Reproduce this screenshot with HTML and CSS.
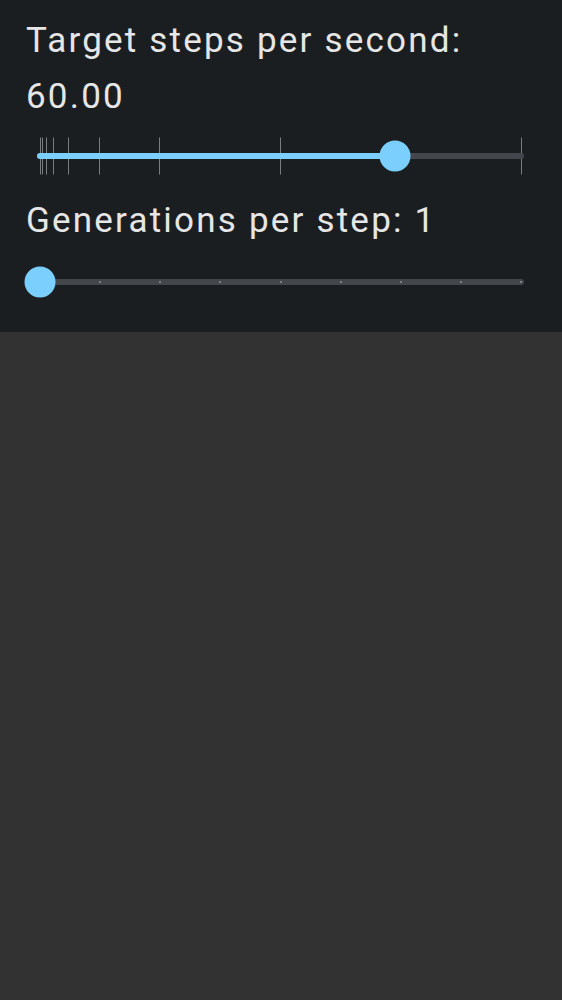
FILE: index.html
```html
<!DOCTYPE html>
<html>
<head>
<meta charset="utf-8">
<link rel="stylesheet" href="styles.css">
</head>
<body>
<section class="panel">
  <div class="label">Target steps per second:<br>60.00</div>
  <div class="slider slider-fps">
    <div class="ticks">
      <span class="tick" style="left:3px"></span>
      <span class="tick" style="left:5.3px"></span>
      <span class="tick" style="left:9.3px"></span>
      <span class="tick" style="left:16.3px"></span>
      <span class="tick" style="left:31.3px"></span>
      <span class="tick" style="left:62px"></span>
      <span class="tick" style="left:122.3px"></span>
      <span class="tick" style="left:243px"></span>
      <span class="tick" style="left:484px"></span>
    </div>
    <div class="track"><div class="fill" style="width:358px"></div></div>
    <div class="thumb" style="left:358.3px"></div>
  </div>
  <div class="label label-gen">Generations per step: 1</div>
  <div class="slider slider-gen">
    <div class="track">
      <span class="dot" style="left:63px"></span>
      <span class="dot" style="left:123px"></span>
      <span class="dot" style="left:183px"></span>
      <span class="dot" style="left:244px"></span>
      <span class="dot" style="left:304px"></span>
      <span class="dot" style="left:364px"></span>
      <span class="dot" style="left:424px"></span>
      <span class="dot" style="left:484px"></span>
    </div>
    <div class="thumb" style="left:3.3px"></div>
  </div>
</section>
</body>
</html>
```
FILE: styles.css
```css
html, body {
  margin: 0;
  padding: 0;
  background: #323232;
  height: 100%;
}
body {
  font-family: Roboto, "Noto Sans", sans-serif;
  color: #e6e6e6;
}
.panel {
  background: #1b1e21;
  padding: 13px 0 17px 0;
  display: flex;
  flex-direction: column;
}
.label {
  font-size: 35px;
  line-height: 56px;
  padding-left: 26px;
  letter-spacing: 2.2px;
}
.label-gen {
  margin-top: 6px;
}
.slider {
  position: relative;
  margin: 0 38px 0 37px;
  display: flex;
  align-items: center;
}
.slider-fps { height: 62px; }
.slider-gen { height: 66px; }
.track {
  position: relative;
  width: 100%;
  height: 6px;
  border-radius: 3px;
  background: #43474c;
  z-index: 1;
}
.fill {
  height: 100%;
  border-radius: 3px;
  background: #7acffd;
}
.ticks {
  position: absolute;
  left: 0;
  right: 0;
  top: 50%;
  height: 37px;
  transform: translateY(-50%);
}
.tick {
  position: absolute;
  top: 0;
  width: 1px;
  height: 37px;
  background: rgba(255, 255, 255, 0.42);
}
.dot {
  position: absolute;
  top: 2px;
  width: 2px;
  height: 2px;
  margin-left: -1px;
  background: #7b7f84;
}
.thumb {
  position: absolute;
  top: 50%;
  width: 31px;
  height: 31px;
  border-radius: 50%;
  background: #7acffd;
  transform: translate(-50%, -50%);
  z-index: 2;
}
```
